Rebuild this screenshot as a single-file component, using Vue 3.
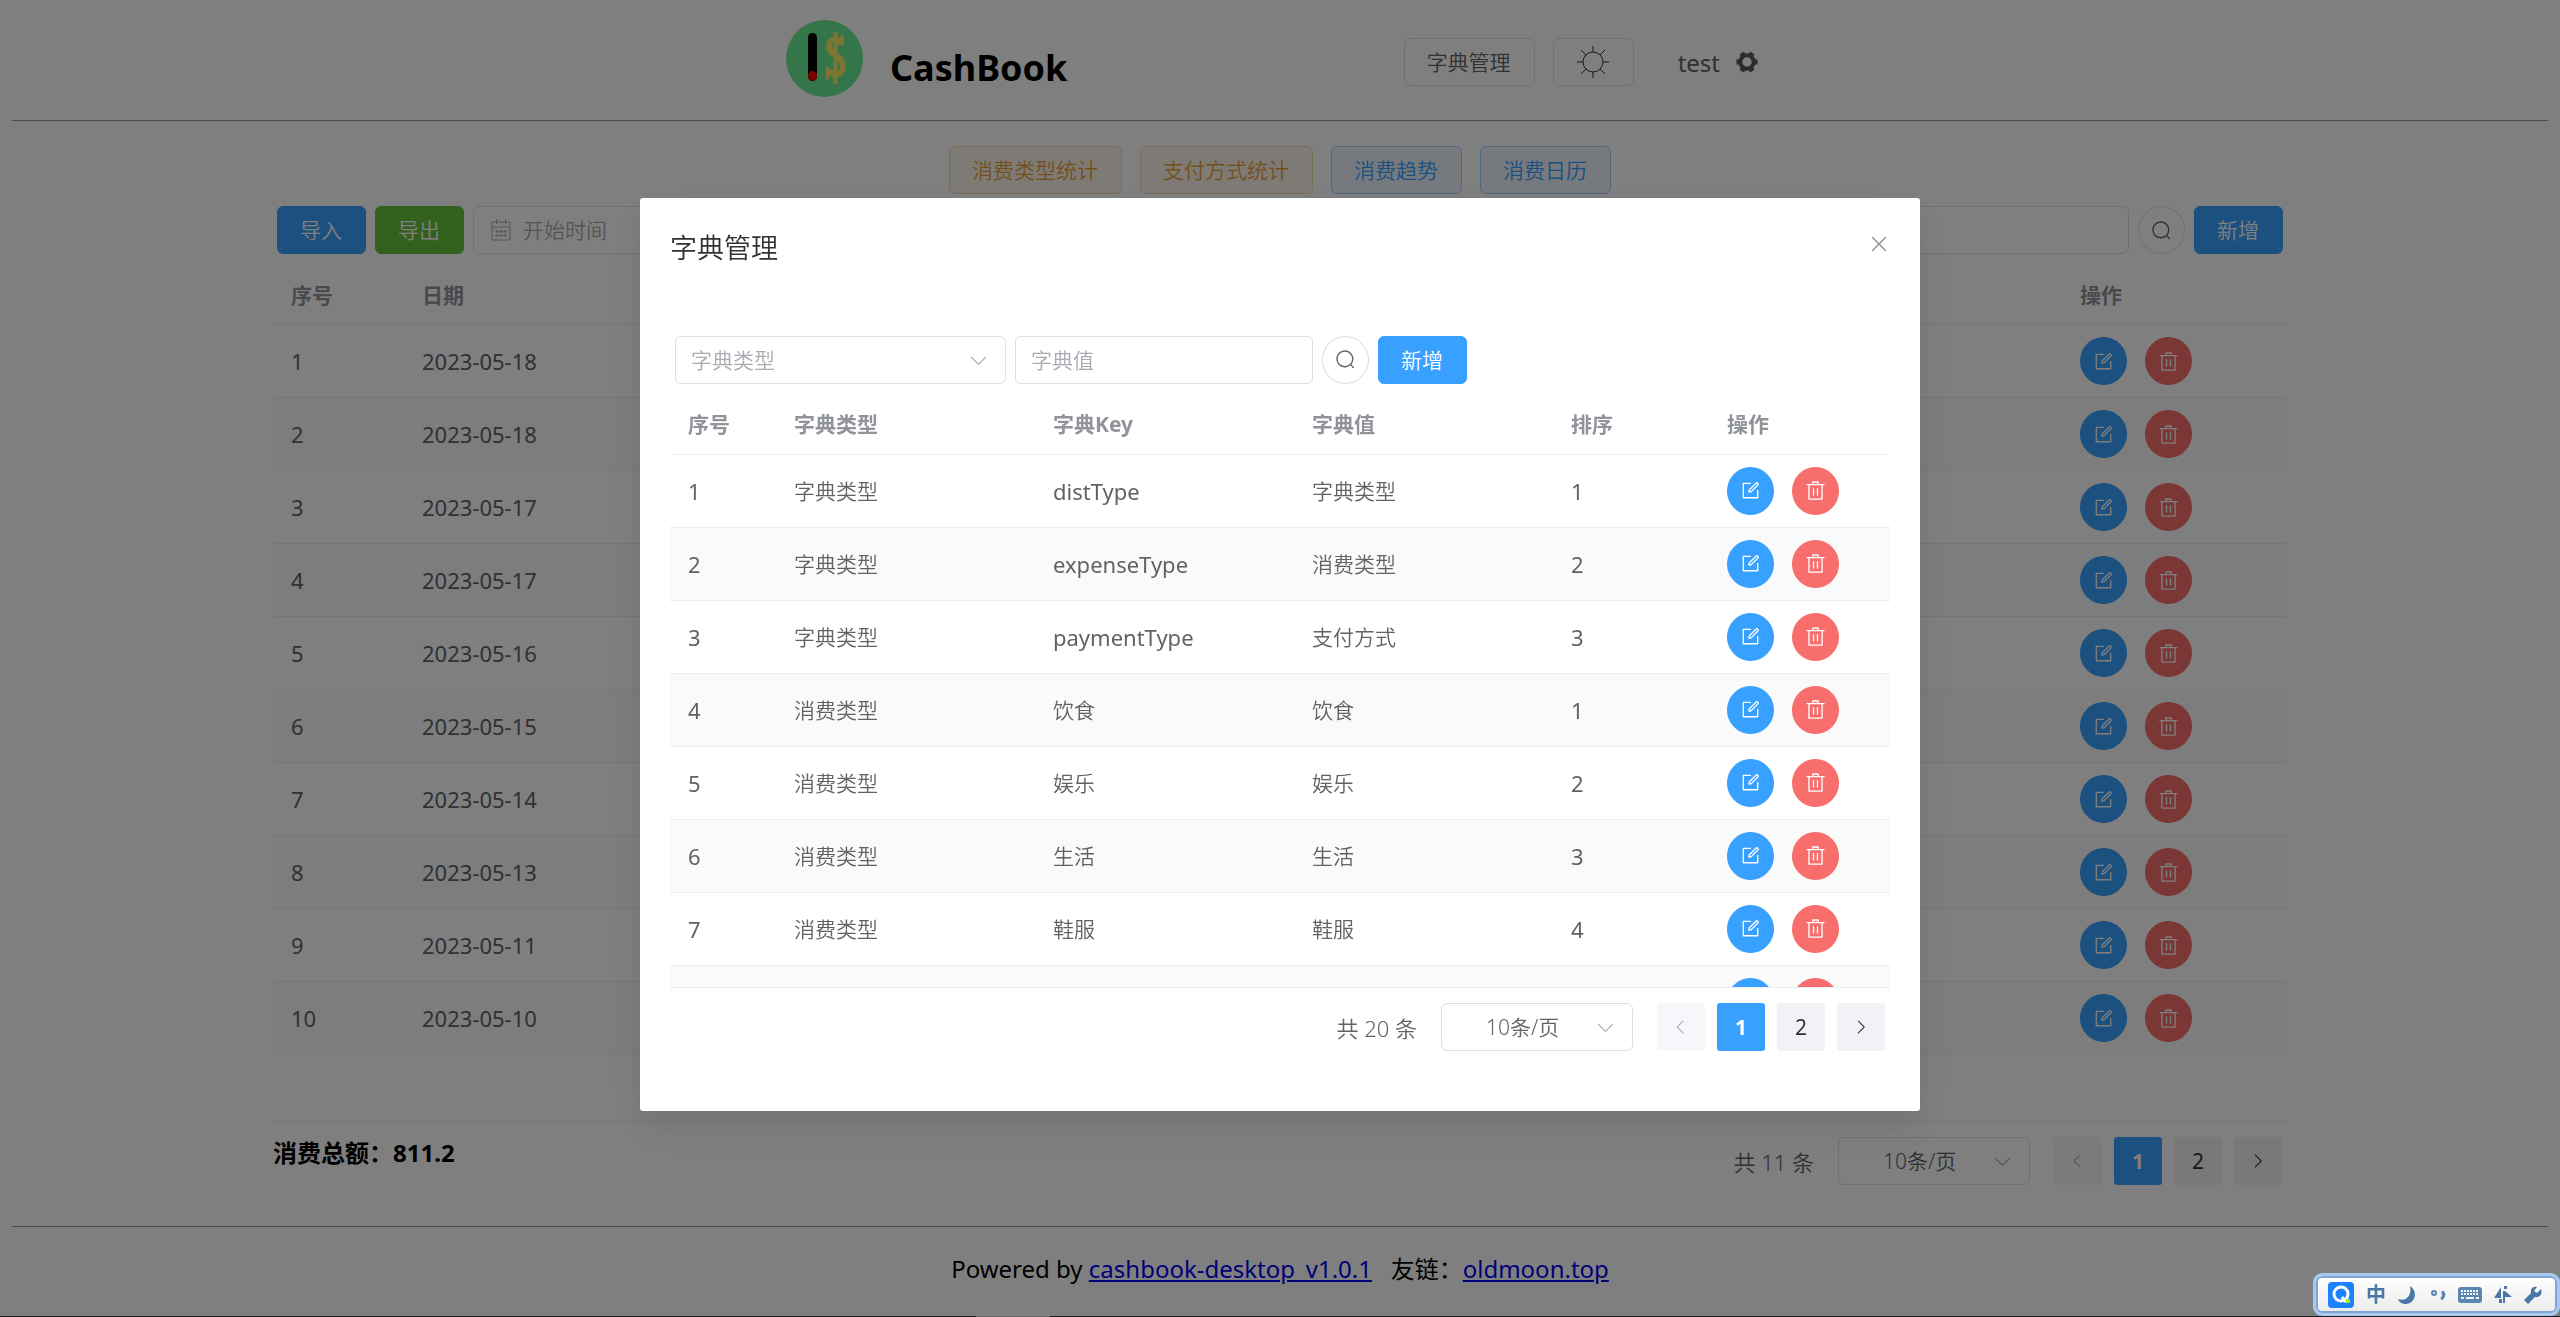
<script setup>
import { h, ref } from 'vue'

const paths = {
  search: ['m795.904 750.72 124.992 124.928a32 32 0 0 1-45.248 45.248L750.656 795.904a416 416 0 1 1 45.248-45.248zM480 832a352 352 0 1 0 0-704 352 352 0 0 0 0 704z'],
  edit: [
    'M832 512a32 32 0 1 1 64 0v352a32 32 0 0 1-32 32H160a32 32 0 0 1-32-32V160a32 32 0 0 1 32-32h352a32 32 0 0 1 0 64H192v640h640V512z',
    'm469.952 554.24 52.8-7.552L847.104 222.4a32 32 0 1 0-45.248-45.248L477.44 501.44l-7.552 52.8zm422.4-422.4a96 96 0 0 1 0 135.808l-331.84 331.84a32 32 0 0 1-18.112 9.088L436.8 623.68a32 32 0 0 1-36.224-36.224l15.104-105.6a32 32 0 0 1 9.024-18.112l331.904-331.84a96 96 0 0 1 135.744 0z',
  ],
  remove: ['M160 256H96a32 32 0 0 1 0-64h256V95.936a32 32 0 0 1 32-32h256a32 32 0 0 1 32 32V192h256a32 32 0 1 1 0 64h-64v672a32 32 0 0 1-32 32H192a32 32 0 0 1-32-32V256zm448-64v-64H416v64h192zM224 896h576V256H224v640zm192-128a32 32 0 0 1-32-32V416a32 32 0 0 1 64 0v320a32 32 0 0 1-32 32zm192 0a32 32 0 0 1-32-32V416a32 32 0 0 1 64 0v320a32 32 0 0 1-32 32z'],
  close: ['M764.288 214.592 512 466.88 259.712 214.592a31.936 31.936 0 0 0-45.12 45.12L466.752 512 214.528 764.224a31.936 31.936 0 1 0 45.12 45.184L512 557.184l252.288 252.288a31.936 31.936 0 0 0 45.12-45.12L557.12 512.064l252.288-252.352a31.936 31.936 0 1 0-45.12-45.184z'],
  down: ['M831.872 340.864 512 652.672 192.128 340.864a30.592 30.592 0 0 0-42.752 0 29.12 29.12 0 0 0 0 41.6L489.664 714.24a32 32 0 0 0 44.672 0l340.288-331.712a29.12 29.12 0 0 0 0-41.728 30.592 30.592 0 0 0-42.752 0z'],
  left: ['M609.408 149.376 277.76 489.6a32 32 0 0 0 0 44.672l331.648 340.352a29.12 29.12 0 0 0 41.728 0 30.592 30.592 0 0 0 0-42.752L339.264 511.936l311.872-319.872a30.592 30.592 0 0 0 0-42.688 29.12 29.12 0 0 0-41.728 0z'],
  right: ['M340.864 149.312a30.592 30.592 0 0 0 0 42.752L652.736 512 340.864 831.872a30.592 30.592 0 0 0 0 42.752 29.12 29.12 0 0 0 41.728 0L714.24 534.336a32 32 0 0 0 0-44.672L382.592 149.376a29.12 29.12 0 0 0-41.728 0z'],
}

const Icon = ({ name }) =>
  h('svg', { viewBox: '0 0 1024 1024', width: 21, height: 21, fill: 'currentColor', 'aria-hidden': 'true' },
    paths[name].map((d) => h('path', { d })))
Icon.props = ['name']

const flows = ref([
  '2023-05-18', '2023-05-18', '2023-05-17', '2023-05-17', '2023-05-16',
  '2023-05-15', '2023-05-14', '2023-05-13', '2023-05-11', '2023-05-10',
])

const dicts = ref([
  { id: 1, type: '字典类型', key: 'distType', value: '字典类型', sort: 1 },
  { id: 2, type: '字典类型', key: 'expenseType', value: '消费类型', sort: 2 },
  { id: 3, type: '字典类型', key: 'paymentType', value: '支付方式', sort: 3 },
  { id: 4, type: '消费类型', key: '饮食', value: '饮食', sort: 1 },
  { id: 5, type: '消费类型', key: '娱乐', value: '娱乐', sort: 2 },
  { id: 6, type: '消费类型', key: '生活', value: '生活', sort: 3 },
  { id: 7, type: '消费类型', key: '鞋服', value: '鞋服', sort: 4 },
  { id: '', type: '', key: '', value: '', sort: '' },
])

const isLatin = (text) => /^[\x20-\x7e]+$/.test(String(text))
</script>

<template>
  <div class="page">
    <header class="top">
      <div class="top-inner">
        <div class="brand">
          <svg class="logo" viewBox="0 0 77 77" aria-hidden="true">
            <circle cx="38.500" cy="38.500" r="38.500" fill="#68ea94" />
            <rect x="22" y="13" width="9" height="48" rx="4.500" fill="#000" />
            <ellipse cx="26.500" cy="56" rx="4.500" ry="5" fill="#f00000" />
            <g fill="none" stroke="#f8ea68">
              <path d="M49.500 12v52" stroke-width="4" />
              <path d="M55 24c-2-7-12-6-12 2 0 10 14 9 14 20 0 11-12 10-14 4" stroke-width="6" />
              <path d="M56 15v11M41.500 47v12" stroke-width="3" />
            </g>
          </svg>
          <h1>CashBook</h1>
        </div>
        <nav class="tools">
          <button class="btn" type="button">字典管理</button>
          <button class="btn theme" type="button" aria-label="主题">
            <svg width="34" height="34" viewBox="0 0 34 34" fill="none" stroke="currentColor" aria-hidden="true">
              <circle cx="17" cy="17" r="10" />
              <path d="M17 1v6M17 27v6M1 17h6M27 17h6M5 5l5 5M24 24l5 5M29 5l-5 5M10 24l-5 5" />
            </svg>
          </button>
          <span class="user">test
            <svg width="22" height="22" viewBox="0 0 22 22" aria-hidden="true">
              <g stroke="currentColor" stroke-width="5">
                <path d="M0.500 11H4M18 11h3.500M5.700 1.900l1.800 3M14.500 17.100l1.800 3M16.300 1.900l-1.800 3M7.500 17.100l-1.800 3" />
              </g>
              <circle cx="11" cy="11" r="6.700" fill="none" stroke="currentColor" stroke-width="4" />
            </svg>
          </span>
        </nav>
      </div>
    </header>

    <main class="main">
      <div class="charts">
        <button class="btn warn" type="button">消费类型统计</button>
        <button class="btn warn" type="button">支付方式统计</button>
        <button class="btn plain" type="button">消费趋势</button>
        <button class="btn plain" type="button">消费日历</button>
      </div>

      <div class="bar">
        <button class="btn primary" type="button">导入</button>
        <button class="btn success" type="button">导出</button>
        <label class="field date">
          <svg width="20" height="24" viewBox="0 0 20 24" fill="none" stroke="currentColor" aria-hidden="true">
            <path d="M1 4h18v18H1zM1 9h18M5.500 1v5M14.500 1v5" />
            <path d="M4.500 13.500h11M4.500 17.500h11" stroke-width="2" stroke-dasharray="3 1" />
          </svg>
          <input type="text" placeholder="开始时间" aria-label="开始时间" />
        </label>
        <input class="field grow" type="text" aria-label="名称" />
        <button class="btn round" type="button" aria-label="查询"><Icon name="search" /></button>
        <button class="btn primary" type="button">新增</button>
      </div>

      <div class="table-box flow-box">
        <table>
          <colgroup><col class="f-no" /><col /><col class="f-op" /></colgroup>
          <thead>
            <tr><th>序号</th><th>日期</th><th>操作</th></tr>
          </thead>
          <tbody>
            <tr v-for="(date, i) in flows" :key="i">
              <td class="latin">{{ i + 1 }}</td>
              <td class="latin">{{ date }}</td>
              <td>
                <div class="ops">
                  <button class="btn round primary" type="button" aria-label="编辑"><Icon name="edit" /></button>
                  <button class="btn round danger" type="button" aria-label="删除"><Icon name="remove" /></button>
                </div>
              </td>
            </tr>
          </tbody>
        </table>
      </div>

      <div class="summary">
        <strong>消费总额：811.2</strong>
        <div class="pager">
          <span class="total">共 11 条</span>
          <span class="select size"><select aria-label="每页条数"><option>10条/页</option></select><Icon name="down" /></span>
          <button type="button" disabled aria-label="上一页"><Icon name="left" /></button>
          <button type="button" class="on">1</button>
          <button type="button">2</button>
          <button type="button" aria-label="下一页"><Icon name="right" /></button>
        </div>
      </div>
    </main>

    <footer class="foot">
      Powered by <a href="#cashbook">cashbook-desktop_v1.0.1</a>&nbsp;&nbsp; 友链：<a href="#oldmoon">oldmoon.top</a>
    </footer>
  </div>

  <div class="mask">
    <section class="dialog" role="dialog" aria-labelledby="dialog-title">
      <div class="dialog-head">
        <h2 id="dialog-title">字典管理</h2>
        <button type="button" class="close" aria-label="关闭"><Icon name="close" /></button>
      </div>

      <div class="bar dialog-bar">
        <span class="select type"><select class="empty" aria-label="字典类型"><option>字典类型</option></select><Icon name="down" /></span>
        <input class="field value" type="text" placeholder="字典值" aria-label="字典值" />
        <button class="btn round" type="button" aria-label="查询"><Icon name="search" /></button>
        <button class="btn primary" type="button">新增</button>
      </div>

      <div class="table-box dict-box">
        <table>
          <colgroup><col class="d-no" /><col class="d-text" /><col class="d-text" /><col class="d-text" /><col class="d-sort" /><col /></colgroup>
          <thead>
            <tr><th>序号</th><th>字典类型</th><th>字典Key</th><th>字典值</th><th>排序</th><th>操作</th></tr>
          </thead>
          <tbody>
            <tr v-for="(row, i) in dicts" :key="i">
              <td class="latin">{{ row.id }}</td>
              <td>{{ row.type }}</td>
              <td :class="{ latin: isLatin(row.key) }">{{ row.key }}</td>
              <td>{{ row.value }}</td>
              <td class="latin">{{ row.sort }}</td>
              <td>
                <div class="ops">
                  <button class="btn round primary" type="button" aria-label="编辑"><Icon name="edit" /></button>
                  <button class="btn round danger" type="button" aria-label="删除"><Icon name="remove" /></button>
                </div>
              </td>
            </tr>
          </tbody>
        </table>
      </div>

      <div class="pager">
        <span class="total">共 20 条</span>
        <span class="select size"><select aria-label="每页条数"><option>10条/页</option></select><Icon name="down" /></span>
        <button type="button" disabled aria-label="上一页"><Icon name="left" /></button>
        <button type="button" class="on">1</button>
        <button type="button">2</button>
        <button type="button" aria-label="下一页"><Icon name="right" /></button>
      </div>
    </section>
  </div>

  <div class="edge"><i></i></div>

  <div class="ime">
    <svg width="26" height="26" viewBox="0 0 26 26" aria-hidden="true">
      <rect width="26" height="26" rx="4" fill="#1e82ff" />
      <circle cx="13" cy="12" r="7" fill="none" stroke="#fff" stroke-width="3" />
      <path d="M14 15l4 5" stroke="#fff" stroke-width="3" />
      <rect x="18" y="17" width="4" height="4" fill="#a4f01e" />
    </svg>
    <span>中</span>
    <svg width="20" height="20" viewBox="0 0 20 20" aria-hidden="true"><path d="M12 1c8 5 6 17-4 18-4 0-7-2-8-5 8 3 14-3 12-13z" fill="#4a76a8" /></svg>
    <svg width="16" height="14" viewBox="0 0 16 14" fill="none" stroke="#5b86b4" stroke-width="2" aria-hidden="true"><circle cx="4" cy="5" r="2" /><path d="M13 3v4M14 5c0 3-1 5-3 6" stroke-width="3" /></svg>
    <svg width="24" height="16" viewBox="0 0 24 16" aria-hidden="true">
      <rect x="1" y="1" width="22" height="14" rx="2" fill="#5b86b4" stroke="#5b86b4" stroke-width="2" />
      <path d="M3 4h18M3 7h18" stroke="#f2f5f9" stroke-width="2" stroke-dasharray="2 1" /><path d="M3 11h3M8 11h8M18 11h3" stroke="#f2f5f9" stroke-width="2" />
    </svg>
    <svg width="18" height="20" viewBox="0 0 18 20" aria-hidden="true"><path d="M7 2v11H0zM5 14h3v4H5zM11 6l7 6h-7v6h-2V6zM10 1h3v3h-3z" fill="#4a76a8" /></svg>
    <svg width="18" height="18" viewBox="0 0 18 18" aria-hidden="true"><path d="M17 3l-4 4-3-2 3-4c-4-1-7 2-6 6l-7 7 4 4 7-7c4 1 8-3 6-8z" fill="#4a76a8" /></svg>
  </div>
</template>

<style>
body {
  background: #fff;
  font-family: "Noto Sans", "Noto Sans CJK SC", sans-serif;
}
</style>

<style scoped>
* { box-sizing: border-box; }
button, input, select { font: inherit; color: inherit; margin: 0; }
.page {
  min-height: 100vh;
  padding: 0 12px;
  font-size: 21px;
  color: #606266;
}
.top {
  height: 121px;
  border-bottom: 1px solid #999;
}
.top-inner {
  max-width: 988px;
  margin: 0 auto;
  padding: 20px 16px 0 0;
  display: flex;
  justify-content: space-between;
  align-items: flex-start;
}
.brand { display: flex; gap: 27px; }
.logo { width: 77px; height: 77px; }
h1 {
  margin: 23px 0 0;
  font-size: 36px;
  line-height: 50px;
  color: #000;
}
.tools { display: flex; align-items: center; gap: 18px; padding-top: 18px; }
.btn {
  display: inline-flex;
  align-items: center;
  justify-content: center;
  flex: none;
  height: 48px;
  padding: 0 23px 0 22px;
  border: 1px solid #dcdfe6;
  border-radius: 6px;
  background: #fff;
  color: #606266;
  font-size: 21px;
  font-weight: 350;
  line-height: 24px;
}
.theme { color: #303133; }
.user {
  display: flex;
  align-items: center;
  gap: 16px;
  padding-left: 26px;
  font-size: 24px;
  color: #606266;
}
.user svg { color: #55585c; }
.btn.warn { color: #eb9e34; border-color: #f5dab1; background: #fdf6ec; }
.btn.plain { color: #38a0ff; border-color: #9fceff; background: #ecf5ff; }
.btn.primary { color: #fff; border-color: #38a0ff; background: #38a0ff; }
.btn.success { color: #fff; border-color: #64c23c; background: #64c23c; }
.btn.danger { color: #fff; border-color: #f76e6c; background: #f76e6c; }
.btn.round { width: 47px; padding: 0; border-radius: 50%; }

.main {
  padding: 25px 261px 41px;
  border-bottom: 1px solid #999;
}
.charts { display: flex; justify-content: center; gap: 18px; }
.bar { display: flex; gap: 9px; padding: 12px 4px 0; }
.field {
  height: 48px;
  border: 1px solid #dcdfe6;
  border-radius: 6px;
  background: #fff;
  padding: 0 15px;
  font-size: 21px;
  font-weight: 350;
}
.date { display: flex; align-items: center; gap: 12px; width: 330px; padding: 0 17px; color: #a8abb2; }
.date input { border: 0; background: none; padding: 0; min-width: 0; flex: 1; }
.grow { flex: 1; min-width: 0; }
input::placeholder { color: #a8abb2; opacity: 1; }

.table-box { overflow: hidden; border-bottom: 1px solid #ebeef5; }
.flow-box { height: 868px; padding-top: 11px; }
.dict-box { height: 604px; padding-top: 11px; }
table { width: 100%; table-layout: fixed; border-collapse: separate; border-spacing: 0; }
th, td { padding: 0 18px; text-align: left; border-bottom: 1px solid #ebeef5; line-height: 34px; }
th { height: 60px; color: #909399; font-weight: 700; }
td { height: 73px; font-weight: 350; }
td.latin { font-size: 22px; font-weight: 400; }
tbody tr:nth-child(even) td { background: #fafafa; }
.f-no { width: 131px; }
.f-op { width: 225px; }
.d-no { width: 106px; }
.d-text { width: 259px; }
.d-sort { width: 156px; }
.ops { display: flex; gap: 18px; }

.summary { display: flex; justify-content: space-between; }
.summary strong { font-size: 24px; line-height: 34px; padding-top: 14px; color: #000; }
.pager {
  display: flex;
  justify-content: flex-end;
  align-items: center;
  gap: 12px;
  padding: 15px 5px 0 0;
}
.total { margin-right: 12px; font-size: 22px; font-weight: 350; }
.pager button {
  display: flex;
  align-items: center;
  justify-content: center;
  width: 48px;
  height: 48px;
  padding: 0;
  border: 0;
  border-radius: 3px;
  background: #f0f2f5;
  color: #303133;
  font-size: 21px;
}
.pager button svg { width: 18px; height: 18px; }
.pager button:disabled { background: #f5f7fa; color: #a8abb2; }
.pager button.on { background: #38a0ff; color: #fff; font-weight: 700; }
.select { position: relative; display: inline-flex; height: 48px; }
.select select {
  appearance: none;
  width: 100%;
  border: 1px solid #dcdfe6;
  border-radius: 6px;
  background: #fff;
  padding: 0 15px;
  font-size: 21px;
  font-weight: 350;
}
.select svg { position: absolute; right: 17px; top: 14px; color: #a8abb2; pointer-events: none; }
.select .empty { color: #a8abb2; }
.size { width: 192px; margin-right: 12px; }
.size select { padding: 0 44px; }

.foot {
  padding: 24px 0 0;
  text-align: center;
  font-size: 24px;
  line-height: 36px;
  color: #000;
}
.foot a { color: #0000ee; }

.mask { position: fixed; inset: 0; padding-top: 15vh; background: rgba(0, 0, 0, 0.5); }
.dialog {
  width: 50%;
  margin: 0 auto;
  padding: 0 30px 60px;
  border-radius: 3px;
  background: #fff;
  font-size: 21px;
  color: #606266;
  box-shadow: 0 18px 48px 6px rgba(0, 0, 0, 0.04), 0 12px 30px rgba(0, 0, 0, 0.08);
}
.dialog-head { display: flex; justify-content: space-between; padding-top: 30px; }
h2 { margin: 0; font-size: 27px; font-weight: 350; line-height: 40px; color: #303133; }
.close {
  display: flex;
  align-items: center;
  justify-content: center;
  width: 22px;
  height: 32px;
  padding: 0;
  border: 0;
  background: none;
  color: #909399;
}
.close svg { width: 24px; height: 24px; flex: none; }
.dialog-bar { padding: 68px 5px 0; }
.type { width: 331px; }
.value { width: 298px; }

.edge { position: fixed; left: 0; right: 0; bottom: 0; height: 1px; padding-left: 976px; background: #1e1e20; }
.edge i { display: block; width: 74px; height: 1px; background: #66666a; }
.ime {
  position: fixed;
  right: 0;
  bottom: 1px;
  width: 247px;
  height: 43px;
  display: flex;
  align-items: center;
  justify-content: space-between;
  padding: 0 15px 0 12px;
  border: 3px solid #a9c8ee;
  border-radius: 9px;
  background: linear-gradient(#fff, #ebebeb);
  box-shadow: inset 0 0 0 2px #7fa5d2;
  color: #4a76a8;
}
.ime span { font-size: 20px; font-weight: 700; line-height: 24px; }
</style>
